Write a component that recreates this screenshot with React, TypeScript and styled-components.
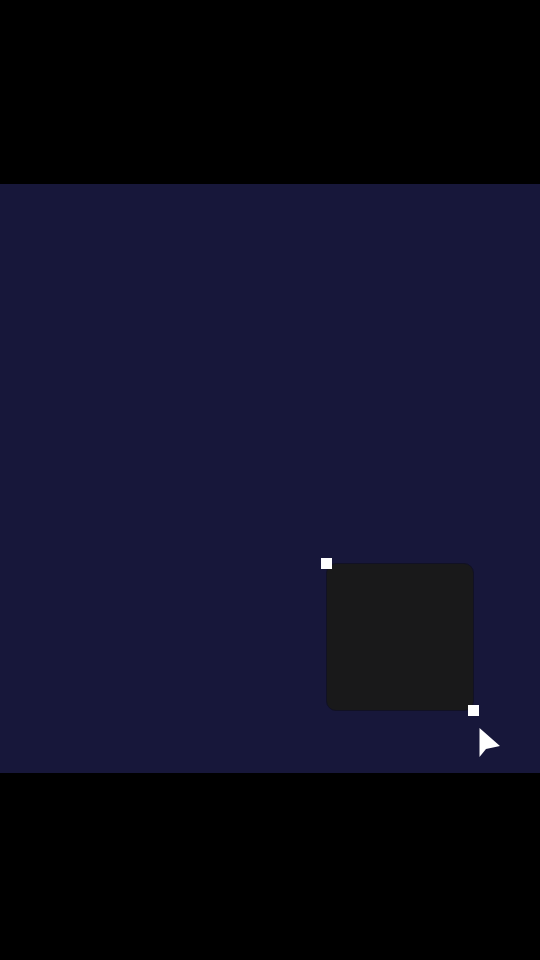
import React, {FC} from 'react'
import styled, {createGlobalStyle} from 'styled-components'

const GlobalStyle = createGlobalStyle`
    html, body {
        margin: 0;
        padding: 0;
        background: #000000;
        font-family: "Liberation Sans", Arial, sans-serif;
    }
`

const Screen = styled.div`
    width: 540px;
    height: 960px;
    background: #000000;
    padding-top: 184px;
    box-sizing: border-box;
`

const Canvas = styled.div`
    position: relative;
    width: 540px;
    height: 589px;
    background: #17173a;
    overflow: hidden;
`

const Shape = styled.div<{x: number; y: number; size: number}>`
    position: absolute;
    left: ${p => p.x}px;
    top: ${p => p.y}px;
    width: ${p => p.size}px;
    height: ${p => p.size}px;
    background: #19191a;
    border: 1px solid #111124;
    border-radius: 10px;
    box-sizing: border-box;
`

const Handle = styled.div<{corner: 'tl' | 'br'}>`
    position: absolute;
    width: 11px;
    height: 11px;
    background: #ffffff;
    ${p => p.corner == 'tl' ? 'left: -6px; top: -6px;' : 'right: -6px; bottom: -6px;'}
`

const Pointer = styled.svg`
    position: absolute;
    left: 479px;
    top: 544px;
    width: 22px;
    height: 30px;
`

const App: FC = () => {
    return <>
        <GlobalStyle />
        <Screen>
            <Canvas>
                <Shape x={326} y={379} size={148}>
                    <Handle corner='tl' />
                    <Handle corner='br' />
                </Shape>
                <Pointer viewBox='0 0 22 30'>
                    <path d='M0.5 0 L0.5 29 L7 21 L21 18 Z' fill='#ffffff' />
                </Pointer>
            </Canvas>
        </Screen>
    </>
}

export default App
